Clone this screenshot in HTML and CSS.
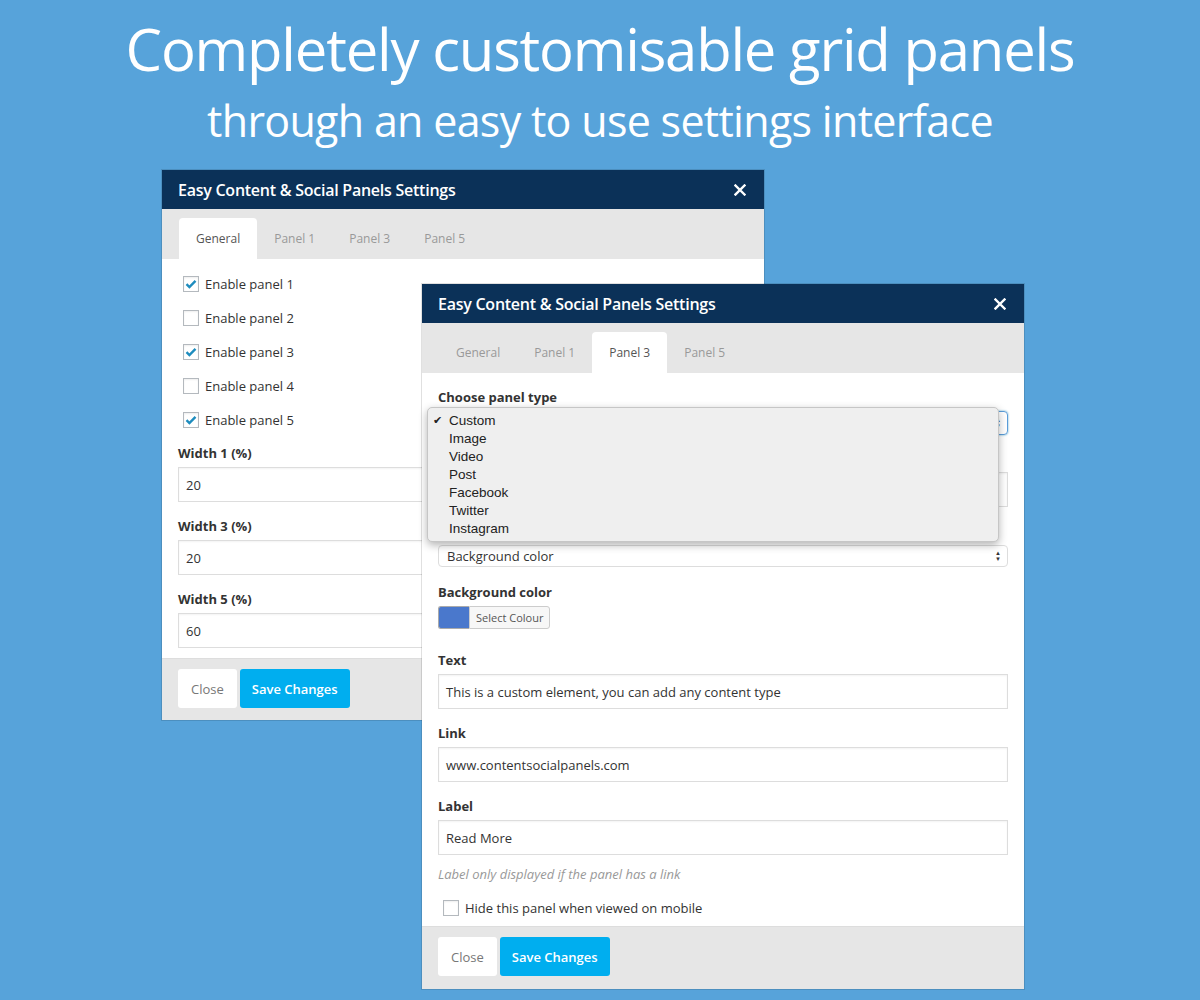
FILE: index.html
```html
<!DOCTYPE html>
<html lang="en">
<head>
<meta charset="utf-8">
<title>Easy Content &amp; Social Panels</title>
<link rel="stylesheet" href="styles.css">
</head>
<body>
<header class="hero">
  <h1 class="hero-title">Completely customisable grid panels</h1>
  <p class="hero-sub">through an easy to use settings interface</p>
</header>

<main class="stage">
  <section class="modal modal-general">
    <div class="modal-head">
      <span class="modal-title">Easy Content &amp; Social Panels Settings</span>
      <svg class="close-x" width="12" height="12" viewBox="0 0 12 12"><path d="M1.5 1.5L10.5 10.5M10.5 1.5L1.5 10.5" stroke="#fff" stroke-width="2.4" stroke-linecap="square"/></svg>
    </div>
    <nav class="tabs">
      <span class="tab active">General</span>
      <span class="tab">Panel 1</span>
      <span class="tab">Panel 3</span>
      <span class="tab">Panel 5</span>
    </nav>
    <div class="modal-body body-general">
      <div class="checks">
        <label class="check-row"><span class="box checked"><svg width="12" height="10" viewBox="0 0 12 10"><path d="M1.5 5.2L4.4 8L10.5 1.8" fill="none" stroke="#1e8cbe" stroke-width="2.4"/></svg></span>Enable panel 1</label>
        <label class="check-row"><span class="box"></span>Enable panel 2</label>
        <label class="check-row"><span class="box checked"><svg width="12" height="10" viewBox="0 0 12 10"><path d="M1.5 5.2L4.4 8L10.5 1.8" fill="none" stroke="#1e8cbe" stroke-width="2.4"/></svg></span>Enable panel 3</label>
        <label class="check-row"><span class="box"></span>Enable panel 4</label>
        <label class="check-row"><span class="box checked"><svg width="12" height="10" viewBox="0 0 12 10"><path d="M1.5 5.2L4.4 8L10.5 1.8" fill="none" stroke="#1e8cbe" stroke-width="2.4"/></svg></span>Enable panel 5</label>
      </div>
      <div class="field">
        <div class="field-label">Width 1 (%)</div>
        <div class="input">20</div>
      </div>
      <div class="field">
        <div class="field-label">Width 3 (%)</div>
        <div class="input">20</div>
      </div>
      <div class="field last">
        <div class="field-label">Width 5 (%)</div>
        <div class="input">60</div>
      </div>
    </div>
    <div class="modal-foot">
      <span class="btn btn-close">Close</span>
      <span class="btn btn-save">Save Changes</span>
    </div>
  </section>

  <section class="modal modal-panel">
    <div class="modal-head">
      <span class="modal-title">Easy Content &amp; Social Panels Settings</span>
      <svg class="close-x" width="12" height="12" viewBox="0 0 12 12"><path d="M1.5 1.5L10.5 10.5M10.5 1.5L1.5 10.5" stroke="#fff" stroke-width="2.4" stroke-linecap="square"/></svg>
    </div>
    <nav class="tabs">
      <span class="tab">General</span>
      <span class="tab">Panel 1</span>
      <span class="tab active">Panel 3</span>
      <span class="tab">Panel 5</span>
    </nav>
    <div class="modal-body body-panel">
      <div class="field compact">
        <div class="field-label">Choose panel type</div>
        <div class="select focus"><span>Custom</span><span class="arrows">&#9650;<br>&#9660;</span></div>
      </div>
      <div class="field compact second">
        <div class="field-label">Title</div>
        <div class="input">Custom panel</div>
      </div>
      <div class="field bg-select">
        <div class="field-label">Background type</div>
        <div class="select small"><span>Background color</span><span class="arrows">&#9650;<br>&#9660;</span></div>
      </div>
      <div class="field">
        <div class="field-label">Background color</div>
        <div class="picker"><span class="swatch"></span><span class="picker-btn">Select Colour</span></div>
      </div>
      <div class="field">
        <div class="field-label">Text</div>
        <div class="input">This is a custom element, you can add any content type</div>
      </div>
      <div class="field">
        <div class="field-label">Link</div>
        <div class="input">www.contentsocialpanels.com</div>
      </div>
      <div class="field help-field">
        <div class="field-label">Label</div>
        <div class="input">Read More</div>
        <div class="help">Label only displayed if the panel has a link</div>
      </div>
      <label class="check-row mobile"><span class="box"></span>Hide this panel when viewed on mobile</label>
    </div>
    <div class="modal-foot">
      <span class="btn btn-close">Close</span>
      <span class="btn btn-save">Save Changes</span>
    </div>

    <ul class="dropdown">
      <li class="opt selected">Custom</li>
      <li class="opt">Image</li>
      <li class="opt">Video</li>
      <li class="opt">Post</li>
      <li class="opt">Facebook</li>
      <li class="opt">Twitter</li>
      <li class="opt">Instagram</li>
    </ul>
  </section>
</main>
</body>
</html>
```
FILE: styles.css
```css
html, body {
  margin: 0;
  padding: 0;
}
body {
  width: 1200px;
  height: 1000px;
  overflow: hidden;
  background: #57a3da;
  font-family: "Open Sans", "Noto Sans", sans-serif;
  color: #333;
}

.hero {
  height: 160px;
  text-align: center;
  color: #fff;
}
.hero-title {
  margin: 0;
  padding-top: 11px;
  font-weight: 400;
  font-size: 58px;
  line-height: 76px;
  letter-spacing: -1.2px;
}
.hero-sub {
  margin: 0;
  padding-top: 4px;
  font-size: 43px;
  line-height: 60px;
  letter-spacing: -0.7px;
}

.stage {
  position: relative;
  height: 840px;
}

.modal {
  position: absolute;
  width: 602px;
  background: #fff;
  box-shadow: 0 0 0 1px rgba(0, 0, 0, 0.12);
}
.modal-general {
  left: 162px;
  top: 10px;
}
.modal-panel {
  left: 422px;
  top: 124px;
}

.modal-head {
  height: 39px;
  background: #0b3158;
  display: flex;
  align-items: center;
  justify-content: space-between;
  padding: 0 18px 0 16px;
}
.modal-title {
  color: #fff;
  font-size: 16px;
  font-weight: 600;
  letter-spacing: -0.25px;
}
.close-x {
  display: block;
}

.tabs {
  height: 50px;
  background: #e6e6e6;
  display: flex;
  align-items: flex-end;
  padding-left: 17px;
  box-sizing: border-box;
}
.tab {
  height: 41px;
  display: flex;
  align-items: center;
  padding: 0 17px;
  font-size: 12px;
  color: #999;
  border-radius: 4px 4px 0 0;
}
.tab.active {
  background: #fff;
  color: #555;
}

.modal-body {
  padding: 8px 16px 10px;
}
.body-panel {
  padding-top: 16px;
  padding-bottom: 0;
}

.checks {
  display: flex;
  flex-direction: column;
  margin-bottom: 8px;
}
.check-row {
  height: 34px;
  display: flex;
  align-items: center;
  font-size: 13px;
  color: #333;
}
.box {
  width: 16px;
  height: 16px;
  box-sizing: border-box;
  border: 1px solid #b4b9be;
  background: #fff;
  margin: 0 6px 0 5px;
  display: flex;
  align-items: center;
  justify-content: center;
  box-shadow: inset 0 1px 2px rgba(0, 0, 0, 0.07);
}
.check-row.mobile {
  height: 36px;
  margin-top: 7px;
}

.field {
  display: flex;
  flex-direction: column;
  margin-bottom: 16px;
}
.field.last {
  margin-bottom: 0;
}
.field.compact {
  margin-bottom: 15px;
}
.field.compact.second {
  margin-bottom: 16px;
}
.field.bg-select {
  margin-bottom: 17px;
}
.field-label {
  font-size: 13px;
  font-weight: 700;
  line-height: 16px;
  margin-bottom: 6px;
  color: #333;
}
.input {
  height: 35px;
  box-sizing: border-box;
  border: 1px solid #ddd;
  box-shadow: inset 0 1px 2px rgba(0, 0, 0, 0.05);
  padding: 0 7px;
  display: flex;
  align-items: center;
  font-size: 13px;
  color: #333;
  white-space: nowrap;
  overflow: hidden;
}
.body-general .input {
  width: 600px;
}

.select {
  height: 24px;
  box-sizing: border-box;
  border: 1px solid #ccc;
  border-radius: 4px;
  padding: 0 6px 0 8px;
  display: flex;
  align-items: center;
  justify-content: space-between;
  font-size: 13px;
}
.select.focus {
  border-color: #5b9dd9;
  box-shadow: 0 0 2px rgba(30, 140, 190, 0.8);
}
.select.small {
  height: 22px;
  border-color: #ddd;
}
.arrows {
  font-size: 6px;
  line-height: 6px;
  color: #333;
  text-align: center;
}

.picker {
  display: flex;
  height: 23px;
  margin-bottom: 7px;
}
.swatch {
  width: 30px;
  background: #4a78cc;
  border: 1px solid #aaa;
  border-right: none;
  border-radius: 3px 0 0 3px;
}
.picker-btn {
  display: flex;
  align-items: center;
  padding: 0 6px;
  font-size: 11px;
  color: #555;
  background: #f7f7f7;
  border: 1px solid #ccc;
  border-radius: 0 3px 3px 0;
}

.help-field {
  margin-bottom: 0;
}
.help {
  margin-top: 10px;
  font-size: 13px;
  line-height: 18px;
  font-style: italic;
  color: #999;
}

.modal-foot {
  background: #e6e6e6;
  border-top: 1px solid #ddd;
  padding: 10px 16px 12px;
  display: flex;
  gap: 3px;
}
.modal-panel .modal-foot {
  padding-bottom: 13px;
}
.btn {
  height: 39px;
  display: flex;
  align-items: center;
  padding: 0 13px;
  border-radius: 3px;
  font-size: 13px;
}
.btn-close {
  background: #fff;
  color: #777;
}
.btn-save {
  background: #00aeef;
  color: #fff;
  font-weight: 600;
  padding: 0 12px;
}

.dropdown {
  position: absolute;
  left: 5px;
  top: 123px;
  width: 572px;
  height: 135px;
  box-sizing: border-box;
  margin: 0;
  padding: 4px 0 0 0;
  list-style: none;
  background: #efefef;
  border: 1px solid #c6c6c6;
  border-radius: 5px;
  box-shadow: 0 3px 8px rgba(0, 0, 0, 0.3);
  font-family: "Liberation Sans", Arial, sans-serif;
  font-size: 13.5px;
  color: #222;
}
.opt {
  height: 18px;
  line-height: 18px;
  padding-left: 21px;
  position: relative;
}
.opt.selected::before {
  content: "\2714";
  position: absolute;
  left: 5px;
  font-size: 11px;
  font-family: "DejaVu Sans", sans-serif;
}
```
